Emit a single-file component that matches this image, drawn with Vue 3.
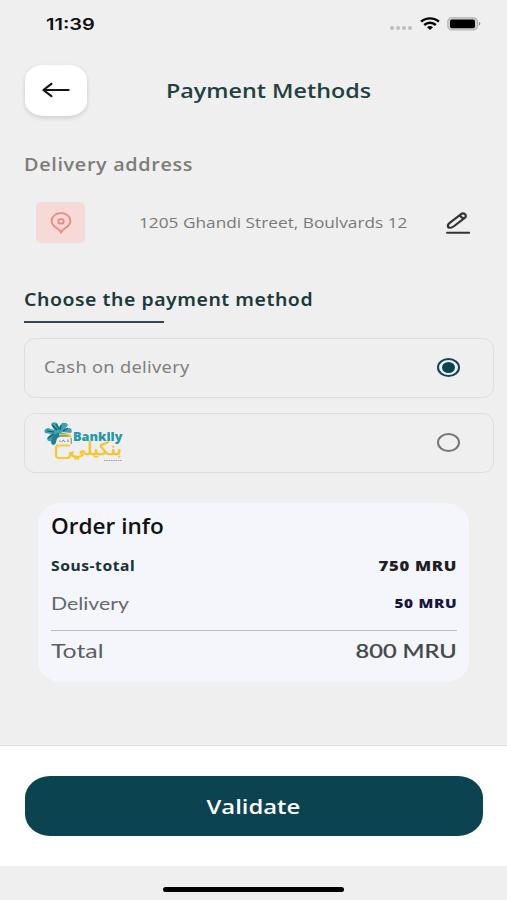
<script setup>
import { ref } from 'vue'

const method = ref('cash')
</script>

<template>
  <main class="screen">
    <header class="status">
      <span class="t clock">11:39</span>
      <div class="indicators">
        <i v-for="n in 4" :key="n" class="dot"></i>
        <svg class="wifi" viewBox="0 0 20 13" fill="none" stroke="#050505" stroke-width="2.4">
          <path d="M1.1 4.7 C6 .2 14 .2 18.9 4.7" />
          <path d="M4.2 8 C7.6 5 12.4 5 15.8 8" />
          <path d="M7 10.3 Q10 7.9 13 10.3 L10 12.9Z" fill="#050505" stroke="none" />
        </svg>
        <svg class="battery" viewBox="0 0 34 14">
          <rect x=".8" y=".8" width="29.6" height="12.2" rx="4" fill="#d0d0d0" stroke="#b4b4b4" stroke-width="1.2" />
          <rect x="3" y="2.6" width="25" height="8.6" rx="1.8" fill="#000" />
          <path d="M31.8 4.8 Q35 6.8 31.8 8.8Z" fill="#8f8f8f" />
        </svg>
      </div>
    </header>

    <div class="topbar">
      <button class="back" aria-label="Back">
        <svg viewBox="0 0 28 16" fill="none" stroke="#151515" stroke-width="2.2" stroke-linecap="round" stroke-linejoin="round">
          <path d="M26.6 8H1.6M9.4 1.8L1.4 8L9.4 14.2" />
        </svg>
      </button>
      <h1 class="t title">Payment Methods</h1>
    </div>

    <h2 class="t label">Delivery address</h2>
    <div class="address">
      <div class="pin">
        <svg viewBox="0 0 22 22" fill="none" stroke="#fa827c" stroke-width="1.8" stroke-linejoin="round">
          <path d="M11 20.8 C10.2 18.6 9 17.4 7 16.2 C3.6 14.2 1.6 12.2 1.6 9 C1.6 4.5 5.7 1.2 11 1.2 C16.3 1.2 20.4 4.5 20.4 9 C20.4 12.2 18.4 14.2 15 16.2 C13 17.4 11.8 18.6 11 20.8Z" />
          <ellipse cx="11" cy="9.4" rx="2.8" ry="2.3" />
        </svg>
      </div>
      <span class="t street">1205 Ghandi Street, Boulvards 12</span>
      <svg class="pen" viewBox="0 0 26 24" fill="none" stroke="#353535" stroke-width="2.2" stroke-linecap="round" stroke-linejoin="round">
        <path d="M3.3 16.4 C2.5 14.8 3 13.3 4.4 12.2 L15.8 3.4 C17.2 2.3 18.9 2.3 20.1 3.3 C21.3 4.3 21.1 5.8 19.7 6.9 L8.6 15.5 C7.2 16.6 5 17 3.3 16.4Z M15.3 4.8 C16 6.2 17 6.9 18.4 7.2" />
        <path d="M2 21.7H24.2" stroke-width="1.9" />
      </svg>
    </div>

    <h2 class="t choose">Choose the payment method</h2>
    <div class="underline"></div>

    <div class="methods">
      <label class="method" @click="method = 'cash'">
        <span class="t cash">Cash on delivery</span>
        <span class="radio" :class="{ on: method === 'cash' }"></span>
      </label>
      <label class="method" @click="method = 'bankily'">
        <svg class="logo" viewBox="0 0 84 42">
          <path d="M1 12 Q-1 8 4 7 L10 9 L7 3 Q9 0 13 2 L15 6 L18 2 Q23 1 24 4 L21 8 L26 7 Q29 9 27 12 L18 11 L12 14 L8 20 Q3 21 3 17 L7 13Z" fill="#3aa3b3" />
          <path d="M7 21 Q8 12 17 11.5 L22 12.5 L27 15.5 H17 Q13 16 12.5 19 Q12 24 9 24 Q7 23 7 21Z" fill="#1f7f94" />
          <path d="M3 10 L10 11 M8 4 L13 9 M17 4 L16 9 M24 7 L19 10 M4 17 L10 13 M12 3 L15 8" stroke="#19566c" stroke-width="1.2" fill="none" />
          <path d="M15 13.5 H23 Q26.5 13.5 26.5 16.5 M12 24.5 H26 M12 25 V34.5 Q12 37 15 37 H23 Q26 37 26 34 V31" fill="none" stroke="#f6c92d" stroke-width="2.2" />
          <path d="M16 21 V19.5 M18 21 Q19 17.5 21 21 M24 18.5 V21 M27.2 17 V23" stroke="#527783" stroke-width=".9" fill="none" />
          <text x="29" y="20.2" textLength="49.5" lengthAdjust="spacingAndGlyphs" class="brand">Bankily</text>
          <text x="26" y="34" textLength="52" lengthAdjust="spacingAndGlyphs" class="arabic">بنكيلي</text>
          <path d="M60 39.5 H78" stroke="#a0a0a0" stroke-width="1" stroke-dasharray="1.6 .7" />
        </svg>
        <span class="radio" :class="{ on: method === 'bankily' }"></span>
      </label>
    </div>

    <section class="order">
      <h3 class="t order-title">Order info</h3>
      <div class="row subtotal"><span class="t name">Sous-total</span><span class="t right amount">750 MRU</span></div>
      <div class="row delivery"><span class="t name">Delivery</span><span class="t right amount">50 MRU</span></div>
      <div class="row total"><span class="t name">Total</span><span class="t right amount">800 MRU</span></div>
    </section>

    <footer class="footer">
      <button class="validate"><span class="t">Validate</span></button>
    </footer>
    <div class="home"><i></i></div>
  </main>
</template>

<style>
body { background: #efefef; }
</style>

<style scoped>
.screen {
  width: 507px;
  height: 900px;
  display: flex;
  flex-direction: column;
  overflow: hidden;
  background: #efefef;
  font-family: "Open Sans", "Noto Sans", sans-serif;
}
h1, h2, h3 { margin: 0; }
button { border: 0; padding: 0; font: inherit; }
i { display: block; }

/* The type is drawn wide: each text sets its own horizontal stretch. */
.t {
  display: block;
  line-height: 24px;
  white-space: nowrap;
  transform: scaleX(var(--wide, 1));
  transform-origin: left center;
}
.t.right { transform-origin: right center; }

.status {
  height: 48px;
  flex: none;
  display: flex;
  align-items: center;
  justify-content: space-between;
  padding: 0 26px 0 46px;
}
.clock { --wide: 1.25; font: 600 16px/24px Inter, sans-serif; color: #101010; }
.indicators { display: flex; align-items: center; gap: 2px; }
.dot { width: 4px; height: 4px; border-radius: 50%; background: #bdbdbd; margin-top: 7px; }
.wifi { width: 20px; height: 13px; margin: 0 5px 1px 6px; }
.battery { width: 34px; height: 14px; }

.topbar {
  flex: none;
  display: flex;
  align-items: center;
  gap: 79px;
  height: 51px;
  padding: 17px 0 0 25px;
}
.back {
  width: 62px;
  height: 51px;
  display: flex;
  align-items: center;
  justify-content: center;
  background: #fff;
  border-radius: 18px / 15px;
  box-shadow: 0 2px 5px rgba(0, 0, 0, .14);
}
.back svg { width: 28px; height: 16px; margin-bottom: 1px; }
.title { --wide: 1.165; font-size: 20px; font-weight: 600; color: #233f40; }

.label {
  --wide: 1.1;
  margin: 36px 0 0 24px;
  font-size: 18px;
  font-weight: 600;
  letter-spacing: .6px;
  color: #7d7c78;
}
.address {
  flex: none;
  height: 41px;
  margin-top: 26px;
  padding: 0 36px;
  display: flex;
  align-items: center;
}
.pin {
  width: 49px;
  height: 41px;
  display: flex;
  align-items: center;
  justify-content: center;
  border-radius: 5px;
  background: #f6dad7;
}
.pin svg { width: 22px; height: 22px; }
.street { --wide: 1.15; margin: 0 0 2px 54px; font-size: 15px; color: #7a7a7a; }
.pen { width: 26px; height: 24px; margin-left: auto; }

.choose {
  --wide: 1.08;
  margin: 44px 0 0 24px;
  font: 600 18px/24px "Noto Sans", sans-serif;
  letter-spacing: .5px;
  color: #1c3a3c;
}
.underline { flex: none; width: 140px; height: 2px; margin: 10px 0 0 24px; background: #37444f; }

.methods { display: flex; flex-direction: column; gap: 15px; margin: 15px 13px 0 24px; }
.method {
  box-sizing: border-box;
  height: 60px;
  padding: 0 33px 2px 19px;
  display: flex;
  align-items: center;
  justify-content: space-between;
  border: 1px solid #dedede;
  border-radius: 11px;
}
.cash { --wide: 1.07; font: 400 17px/24px "Noto Sans", sans-serif; letter-spacing: .3px; color: #808080; }
.radio {
  box-sizing: border-box;
  width: 23px;
  height: 19px;
  display: flex;
  align-items: center;
  justify-content: center;
  border: 2px solid #767676;
  border-radius: 50%;
}
.radio.on { border-color: #124652; }
.radio.on::after { content: ""; width: 13px; height: 11px; flex: none; border-radius: 50%; background: #0d4350; }
.logo { width: 84px; height: 42px; overflow: visible; }
.brand { font: 800 13px "Open Sans", sans-serif; fill: #2598aa; }
.arabic { font: 400 18px "DejaVu Sans", sans-serif; fill: #f5c62c; stroke: #f5c62c; stroke-width: .5px; }

.order {
  box-sizing: border-box;
  flex: none;
  height: 179px;
  margin: 30px 38px 0;
  padding: 11px 12px 0 13px;
  border-radius: 24px / 20px;
  background: #f4f6fb;
}
.order-title { --wide: 1.075; font-size: 21px; font-weight: 600; color: #111; }
.row { display: flex; align-items: center; justify-content: space-between; height: 24px; }
.subtotal { margin-top: 16px; }
.subtotal .name { --wide: 1.115; font: 700 14px/24px "Noto Sans", sans-serif; letter-spacing: .5px; color: #173335; }
.subtotal .amount { --wide: 1.19; font-size: 14px; font-weight: 800; letter-spacing: .6px; color: #202024; }
.delivery { margin-top: 13px; }
.delivery .name { --wide: 1.18; font: 400 18px/24px Lato, sans-serif; color: #66686b; }
.delivery .amount { --wide: 1.18; font-size: 13px; font-weight: 800; letter-spacing: .6px; color: #16163f; }
.total { height: 38px; margin-top: 15px; border-top: 1px solid #b9bcc0; }
.total .name { --wide: 1.24; font: 400 20px/24px Lato, sans-serif; color: #5c5e61; }
.total .amount { --wide: 1.18; font: 500 20px/24px Lato, sans-serif; color: #45474a; -webkit-text-stroke: .2px #45474a; }

.footer {
  box-sizing: border-box;
  flex: none;
  height: 121px;
  margin-top: auto;
  padding: 30px 24px 0 25px;
  border-top: 1px solid #dfdfdf;
  background: #fff;
}
.validate {
  width: 100%;
  height: 60px;
  display: flex;
  align-items: center;
  justify-content: center;
  border-radius: 25px / 22px;
  background: #0c4350;
}
.validate .t { --wide: 1.19; margin: 2px 2px 0 0; transform-origin: center; font-size: 20px; font-weight: 600; color: #fff; }
.home {
  box-sizing: border-box;
  flex: none;
  height: 34px;
  padding-bottom: 8px;
  display: flex;
  align-items: flex-end;
  justify-content: center;
}
.home i { width: 181px; height: 5px; border-radius: 3px; background: #000; }
</style>
